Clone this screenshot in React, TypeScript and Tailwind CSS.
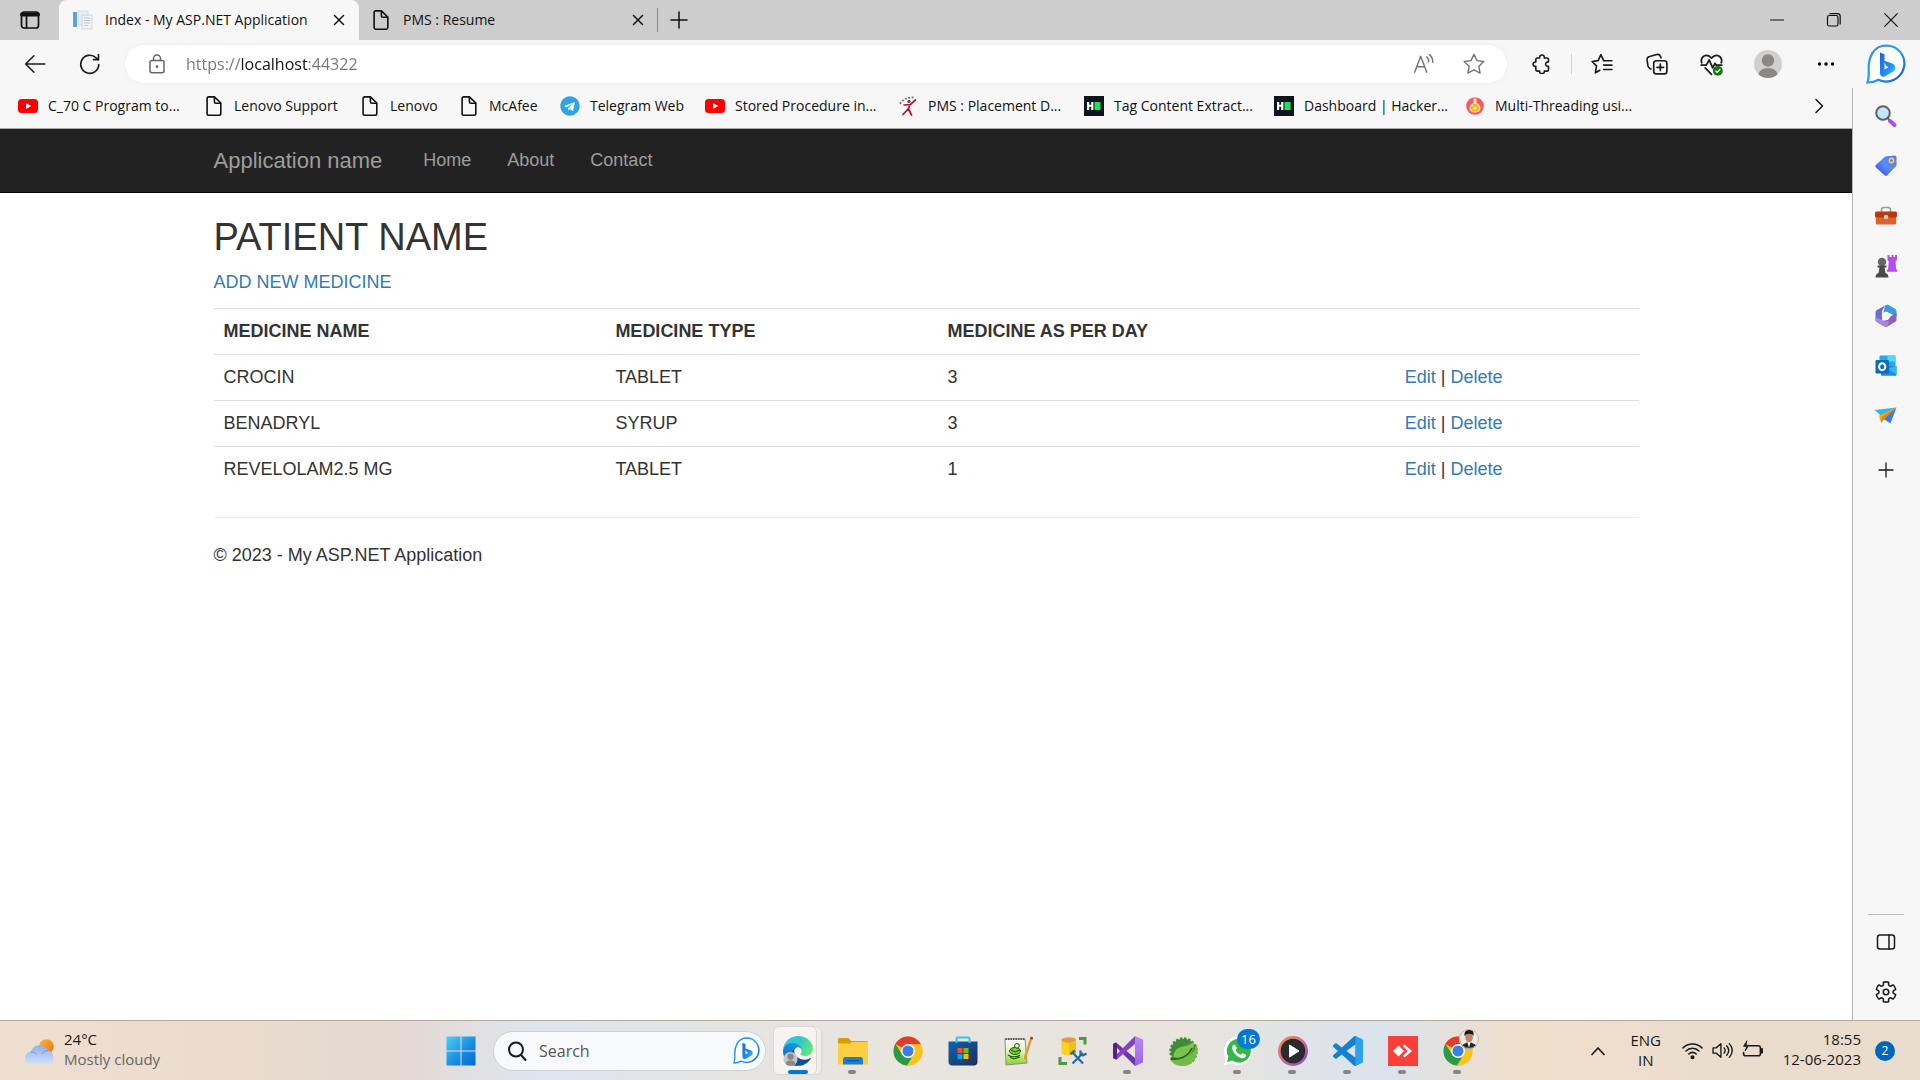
import React from "react";
import { FaTelegram } from "react-icons/fa";

type Kids = { children: React.ReactNode };

/* ---------- Icon helpers ---------- */

function Line({ size = 20, width = 1.5, className = "", children }: Kids & { size?: number; width?: number; className?: string }) {
  return (
    <svg
      width={size}
      height={size}
      viewBox="0 0 20 20"
      fill="none"
      stroke="currentColor"
      strokeWidth={width}
      strokeLinecap="round"
      strokeLinejoin="round"
      className={`shrink-0 ${className}`}
      aria-hidden="true"
    >
      {children}
    </svg>
  );
}

function Art({ size = 30, box = "0 0 30 30", children }: Kids & { size?: number; box?: string }) {
  return (
    <svg width={size} height={size} viewBox={box} className="shrink-0" aria-hidden="true">
      {children}
    </svg>
  );
}

const PageIcon = () => (
  <Line width={1.6}>
    <path d="M4.800 .9h5.600L16.800 7v10.500a1.700 1.700 0 0 1-1.700 1.700H4.800a1.700 1.700 0 0 1-1.700-1.700V2.600A1.700 1.700 0 0 1 4.800 .9z" />
    <path d="M10.400 1.200v4.600a1.500 1.500 0 0 0 1.500 1.500h4.600" />
  </Line>
);

const CloseIcon = () => (
  <Line size={20}>
    <path d="M5.500 5.500l9 9M14.500 5.500l-9 9" />
  </Line>
);

const YouTubeIcon = () => (
  <Art size={20} box="0 0 20 20">
    <rect x="0" y="3" width="20" height="14" rx="3.500" fill="#f00" />
    <path d="M8 7l5.200 3L8 13z" fill="#fff" />
  </Art>
);

const HackerIcon = () => (
  <Art size={20} box="0 0 20 20">
    <rect width="20" height="20" fill="#0e141e" />
    <path d="M3 6h2.200v2.800h2V6h2.200v8H7.200v-3.200h-2V14H3z" fill="#fff" />
    <rect x="10.500" y="6" width="6" height="8" fill="#1ee05f" />
  </Art>
);

const RunnerIcon = () => (
  <Art size={20} box="0 0 20 20">
    <path d="M2 8C5 3 10 1 17 1.500" stroke="#777" strokeWidth="1.800" strokeDasharray="2 1.500" fill="none" />
    <circle cx="11" cy="5.500" r="1.700" fill="#555" />
    <path d="M17.500 4L12.500 8.500l-6.500.5M12 8.500l-1.500 4.500 3 6M10.500 12.500l-5.500 6" stroke="#b5122f" strokeWidth="1.700" fill="none" strokeLinecap="round" />
  </Art>
);

const FlaskIcon = () => (
  <Art size={20} box="0 0 20 20">
    <circle cx="10" cy="10" r="8.800" fill="#f4595b" />
    <path d="M8.500 2.500h3v4.500c2.500 1 4 3 4 5.200 0 2.600-2.300 4.300-5.500 4.300s-5.500-1.700-5.500-4.300C4.500 10 6 8 8.500 7z" fill="#fbe3dc" />
    <path d="M8 8h4v1.500c1.500.5 2.300 1.500 2.300 3 0 1.900-1.800 3-4.300 3s-4.300-1.100-4.300-3c0-1.500.8-2.500 2.300-3z" fill="#f5b81c" />
    <path d="M8.500 11h3v2.500h-3z" fill="#fbe88c" />
  </Art>
);

const TelegramIcon = () => (
  <span className="flex size-5 shrink-0 items-center justify-center rounded-full bg-white">
    <FaTelegram className="size-5 text-[#2ca5e0]" />
  </span>
);

function BingIcon({ size, id }: { size: number; id: string }) {
  return (
    <Art size={size} box="0 0 40 40">
      <defs>
        <linearGradient id={`${id}r`} x1="0" y1="0" x2="1" y2="1">
          <stop offset="0" stopColor="#2390f0" />
          <stop offset=".5" stopColor="#2a9df4" />
          <stop offset="1" stopColor="#1452c8" />
        </linearGradient>
        <linearGradient id={`${id}b`} x1="0" y1="0" x2="1" y2="1">
          <stop offset="0" stopColor="#1b62e0" />
          <stop offset=".6" stopColor="#1f8df0" />
          <stop offset="1" stopColor="#35d6e8" />
        </linearGradient>
      </defs>
      <path d="M20.500 1.500a18 18 0 1 1-8 34.200c-3 1.700-6.500 2.700-11 2.800 1.400-4 1.400-7 1.200-11.500C2 14 7 1.500 20.500 1.500z" fill="#fff" stroke={`url(#${id}r)`} strokeWidth="2.200" />
      <path d="M14 8.500l4.500 1.700v15.300l4-2.200-2.500-1.500-2.200-5.300 9.500 3.400c3 1.500 2.400 6-.4 7.800l-8.200 4.800c-2.400 1-4.700-.8-4.700-3.200z" fill={`url(#${id}b)`} />
    </Art>
  );
}

function gearPath() {
  const pt = (r: number, deg: number) => {
    const a = (deg * Math.PI) / 180;
    return `${(10 + r * Math.cos(a)).toFixed(2)} ${(10 + r * Math.sin(a)).toFixed(2)}`;
  };
  let d = "";
  for (let k = 0; k < 6; k++) {
    const c = k * 60 - 90;
    d += `${k === 0 ? "M" : "L"}${pt(6.7, c - 21)}L${pt(9.1, c - 15)}Q${pt(9.6, c)} ${pt(9.1, c + 15)}L${pt(6.7, c + 21)}Q${pt(6.2, c + 30)} ${pt(6.7, c + 39)}`;
  }
  return d + "Z";
}

/* ---------- Browser chrome ---------- */

function IconButton({ label, className, children }: Kids & { label: string; className: string }) {
  return (
    <button type="button" aria-label={label} className={`flex shrink-0 items-center justify-center ${className}`}>
      {children}
    </button>
  );
}

function TabBar() {
  return (
    <div className="flex h-10 shrink-0 items-stretch bg-[#cdcdcd] pr-px text-[14px] text-[#111]">
      <IconButton label="Tab actions" className="w-[59px]">
        <Line width={1.700}>
          <rect x="1.500" y="2" width="17" height="16" rx="2.500" />
          <path d="M2 4.500h16" strokeWidth="4" />
          <path d="M6.500 6v12" />
        </Line>
      </IconButton>
      <div className="flex w-[300px] items-center rounded-t-lg bg-[#f7f7f7] pl-[14px] pr-[10px]">
        <Art size={20} box="0 0 20 20">
          <rect x="0" y="2" width="4" height="15" fill="#5ba3d9" />
          <rect x="5" y="1" width="10" height="14" fill="#e8edf2" stroke="#c3ccd6" strokeWidth=".6" />
          <rect x="9" y="5" width="10" height="14" fill="#f1f4f7" stroke="#b6c0cc" strokeWidth=".6" />
          <path d="M11 8h6M11 10.500h6M11 13h6M11 15.500h4" stroke="#b9c6d4" />
        </Art>
        <span className="ml-3 flex-1 whitespace-nowrap pb-0.5">Index - My ASP.NET Application</span>
        <IconButton label="Close tab" className="size-5"><CloseIcon /></IconButton>
      </div>
      <div className="flex w-[298px] items-center pl-[12px] pr-[9px]">
        <PageIcon />
        <span className="ml-3 flex-1 whitespace-nowrap pb-0.5">PMS : Resume</span>
        <IconButton label="Close tab" className="size-5"><CloseIcon /></IconButton>
      </div>
      <div className="my-2 w-px bg-[#888]" />
      <IconButton label="New tab" className="w-[42px]">
        <Line><path d="M10 2v16M2 10h16" /></Line>
      </IconButton>
      <div className="flex-1" />
      <IconButton label="Minimize" className="w-[57px]">
        <Line width={1.200}><path d="M3.500 10h13" /></Line>
      </IconButton>
      <IconButton label="Restore" className="w-[57px]">
        <Line width={1.200}>
          <rect x="3.500" y="5.500" width="10.500" height="10.500" rx="1.800" />
          <path d="M6 3.700h7.500a2.700 2.700 0 0 1 2.700 2.700V14" />
        </Line>
      </IconButton>
      <IconButton label="Close" className="w-[57px]">
        <Line width={1.200}><path d="M3.700 3.700l12.600 12.600M16.300 3.700L3.700 16.300" /></Line>
      </IconButton>
    </div>
  );
}

function Toolbar() {
  return (
    <div className="flex h-12 shrink-0 items-center bg-[#f7f7f7] pr-0.5 text-[#1a1a1a]">
      <IconButton label="Back" className="ml-[7px] h-10 w-14">
        <Line size={22} width={1.400}><path d="M19 10H1.500M9 2.500L1.500 10 9 17.500" /></Line>
      </IconButton>
      <IconButton label="Refresh" className="h-10 w-[54px]">
        <Line size={22} width={1.500}>
          <path d="M18 10.500A8.200 8.200 0 1 1 15.300 4.200L17.500 6" />
          <path d="M17.700 1.500V6h-4.500" />
        </Line>
      </IconButton>
      <div className="ml-2 flex h-[38px] flex-1 items-center rounded-full bg-white pl-[22px] pr-2 shadow-[0_0_4px_rgba(0,0,0,0.06)]">
        <Line className="text-[#666]">
          <rect x="3" y="6.500" width="14" height="12.300" rx="2" />
          <path d="M6.500 6.500V4.500a3.500 3.500 0 0 1 7 0v2" />
          <circle cx="10" cy="12.600" r=".7" fill="currentColor" />
        </Line>
        <input
          type="text"
          aria-label="Address"
          defaultValue="https://localhost:44322"
          className="ml-[19px] min-w-0 flex-1 bg-[linear-gradient(90deg,#767676_55px,#111_55px,#111_122px,#767676_122px)] bg-clip-text text-[16px] text-transparent outline-none"
        />
        <IconButton label="Read aloud" className="w-[50px] text-[#757575]">
          <Line size={22} width={1.300}>
            <path d="M1.500 17.500L7 3l5.500 14.500M3.500 12.500h7" />
            <path d="M12.500 3.500a6 6 0 0 1 1.800 4.500M15 1.500a9 9 0 0 1 3 7" />
          </Line>
        </IconButton>
        <IconButton label="Add to favorites" className="w-[50px] text-[#757575]">
          <Line size={22} width={1.300}>
            <path d="M10 1.200l2.700 5.700 6.200.8-4.500 4.300 1.100 6.300L10 15.300l-5.500 3 1.100-6.300L1.100 7.700l6.200-.8z" />
          </Line>
        </IconButton>
      </div>
      <IconButton label="Extensions" className="ml-[7px] w-[55px]">
        <Line width={1.600}>
          <path d="M5.500 4h2.200C7.300 1.800 8.500 1 10 1s2.700.8 2.300 3h2.500c1 0 1.700.7 1.700 1.700v2.200c-3.800-.3-3.800 4.800 0 4.500v3c0 1-.7 1.700-1.700 1.700h-2.500c.4 2-1 2.400-2.300 2.400s-2.700-.4-2.300-2.400H5.500c-1 0-1.700-.7-1.700-1.700v-3c-3.600.4-3.600-4.700 0-4.400V5.700C3.800 4.700 4.500 4 5.500 4z" />
        </Line>
      </IconButton>
      <div className="mx-[2px] h-5 w-px bg-[#cfcfcf]" />
      <IconButton label="Favorites" className="w-[55px]">
        <Line size={22} width={1.500}>
          <path d="M11.500 7L9 1.500 6.500 6.900 1 7.700l4 4-1 6.300 4-2.300" />
          <path d="M12 7h7M11.500 11h7.500M11.500 15h7.500" />
        </Line>
      </IconButton>
      <IconButton label="Collections" className="w-[55px]">
        <Line size={22} width={1.500}>
          <rect x="7" y="7" width="12" height="12" rx="2.500" />
          <path d="M13 10v6M10 13h6M4.500 14.500l-1-.5a3 3 0 0 1-1.700-2.200L1 6.500a3 3 0 0 1 2.300-3.300l6.500-1.800a3 3 0 0 1 3.500 2l.3 1" />
        </Line>
      </IconButton>
      <IconButton label="Browser essentials" className="w-[55px]">
        <Line size={23} width={1.500}>
          <path d="M1.500 8.500C0 4 4 1 7.500 2.500c1 .5 1.700 1.200 2.500 2 .8-.8 1.500-1.500 2.500-2C16 1 20 4 18.500 8.500" />
          <path d="M1 10.500h4.500L8 6l3 7 2-4 1 1.500h5M4.500 13L10 18.500" />
          <circle cx="15.500" cy="15.500" r="4.300" fill="#117a13" stroke="none" />
          <path d="M13.700 15.700l1.300 1.200 2.300-2.700" stroke="#fff" strokeWidth="1.100" />
        </Line>
      </IconButton>
      <IconButton label="Profile" className="w-[58px]">
        <Art size={28} box="0 0 28 28">
          <clipPath id="avatar"><circle cx="14" cy="14" r="14" /></clipPath>
          <g clipPath="url(#avatar)">
            <rect width="28" height="28" fill="#d2d0ce" />
            <circle cx="14" cy="10.500" r="6.200" fill="#8a8886" />
            <path d="M4 28c0-6 3-10 10-10s10 4 10 10z" fill="#8a8886" />
          </g>
        </Art>
      </IconButton>
      <IconButton label="Settings and more" className="w-[57px]">
        <Art size={20} box="0 0 20 20">
          <circle cx="3.500" cy="10" r="1.700" /><circle cx="10" cy="10" r="1.700" /><circle cx="16.500" cy="10" r="1.700" />
        </Art>
      </IconButton>
      <IconButton label="Bing" className="w-[64px]">
        <BingIcon size={40} id="bt" />
      </IconButton>
    </div>
  );
}

const bookmarks = [
  { label: "C_70 C Program to...", icon: <YouTubeIcon />, width: "w-[186px]" },
  { label: "Lenovo Support", icon: <PageIcon />, width: "w-[156px]" },
  { label: "Lenovo", icon: <PageIcon />, width: "w-[99px]" },
  { label: "McAfee", icon: <PageIcon />, width: "w-[101px]" },
  { label: "Telegram Web", icon: <TelegramIcon />, width: "w-[145px]" },
  { label: "Stored Procedure in...", icon: <YouTubeIcon />, width: "w-[193px]" },
  { label: "PMS : Placement D...", icon: <RunnerIcon />, width: "w-[186px]" },
  { label: "Tag Content Extract...", icon: <HackerIcon />, width: "w-[190px]" },
  { label: "Dashboard | Hacker...", icon: <HackerIcon />, width: "w-[191px]" },
  { label: "Multi-Threading usi...", icon: <FlaskIcon />, width: "w-[180px]" },
];

function BookmarksBar() {
  return (
    <nav aria-label="Bookmarks" className="flex h-[41px] shrink-0 items-center border-b border-[#a9a9a9] bg-[#f7f7f7] pb-1 pl-[18px] text-[14px] text-[#111]">
      {bookmarks.map((b) => (
        <a key={b.label} href="#" className={`flex shrink-0 items-center gap-[10px] whitespace-nowrap ${b.width}`}>
          {b.icon}
          <span className="pb-0.5">{b.label}</span>
        </a>
      ))}
      <div className="flex-1" />
      <IconButton label="More bookmarks" className="w-[66px]">
        <Line><path d="M7 3.500l6.500 6.500L7 16.500" /></Line>
      </IconButton>
    </nav>
  );
}

/* ---------- Web page ---------- */

const medicines = [
  { name: "CROCIN", type: "TABLET", perDay: "3" },
  { name: "BENADRYL", type: "SYRUP", perDay: "3" },
  { name: "REVELOLAM2.5 MG", type: "TABLET", perDay: "1" },
];

function WebPage() {
  return (
    <div className="min-h-0 flex-1 bg-white font-['Liberation_Sans',Arial,sans-serif] text-[18px] leading-[25px] text-[#333]">
      <header className="border-b border-[#080808] bg-[#222] text-[#9d9d9d]">
        <div className="mx-auto flex h-[63px] max-w-[1425px] items-center">
          <a href="#" className="mr-[23px] text-[22px]">Application name</a>
          <nav className="flex">
            <a href="#" className="px-[18px]">Home</a>
            <a href="#" className="px-[18px]">About</a>
            <a href="#" className="px-[18px]">Contact</a>
          </nav>
        </div>
      </header>
      <main className="mx-auto max-w-[1425px] pt-[23px]">
        <h2 className="text-[38px] leading-[42px]">PATIENT NAME</h2>
        <p className="mt-3"><a href="#" className="text-[#337ab7]">ADD NEW MEDICINE</a></p>
        <table className="mt-[13px] w-full table-fixed border-collapse text-left">
          <thead>
            <tr className="border-t border-[#ddd]">
              <th className="w-[27.5%] px-[10px] py-[10px]">MEDICINE NAME</th>
              <th className="w-[23.3%] px-[10px] py-[10px]">MEDICINE TYPE</th>
              <th className="w-[32.1%] px-[10px] py-[10px]">MEDICINE AS PER DAY</th>
              <th className="w-[17.1%] px-[10px] py-[10px]" aria-label="Actions" />
            </tr>
          </thead>
          <tbody>
            {medicines.map((m) => (
              <tr key={m.name} className="border-t border-[#ddd]">
                <td className="px-[10px] py-[10px]">{m.name}</td>
                <td className="px-[10px] py-[10px]">{m.type}</td>
                <td className="px-[10px] py-[10px]">{m.perDay}</td>
                <td className="px-[10px] py-[10px]">
                  <a href="#" className="text-[#337ab7]">Edit</a> | <a href="#" className="text-[#337ab7]">Delete</a>
                </td>
              </tr>
            ))}
          </tbody>
        </table>
        <footer className="mt-[25px] border-t border-[#eee] pt-[25px]">
          <p>© 2023 - My ASP.NET Application</p>
        </footer>
      </main>
    </div>
  );
}

/* ---------- Side bar ---------- */

const sideApps = [
  {
    label: "Search",
    icon: (
      <Art size={24} box="0 0 24 24">
        <path d="M16 17l4.500 4" stroke="#b14af0" strokeWidth="4" strokeLinecap="round" />
        <path d="M13 13.500l2.500 2.500" stroke="#6a6a6a" strokeWidth="2" />
        <circle cx="9" cy="9" r="6.800" fill="#bfe6fb" stroke="#626262" strokeWidth="2" />
      </Art>
    ),
  },
  {
    label: "Shopping",
    icon: (
      <Art size={24} box="0 0 24 24">
        <defs>
          <linearGradient id="tag" x1="1" y1="0" x2="0" y2="1"><stop offset="0" stopColor="#4f78ff" /><stop offset=".5" stopColor="#5a8cf5" /><stop offset="1" stopColor="#3d3df0" /></linearGradient>
        </defs>
        <path d="M12.500 2.200L20.500 1.500c1.300 0 2 .8 2 2v7.300c0 .7-.3 1.200-.7 1.700l-8.500 8.800c-.8.800-2 .8-2.800 0L2 13.500c-.8-.8-.8-2 0-2.800l9-8c.4-.3.900-.5 1.500-.5z" fill="url(#tag)" />
        <circle cx="17.500" cy="6.500" r="2.100" fill="#6b6be0" stroke="#ffd43a" strokeWidth="1.600" />
      </Art>
    ),
  },
  {
    label: "Tools",
    icon: (
      <Art size={24} box="0 0 24 24">
        <path d="M7.500 8V6c0-1.500 1-2.500 2.500-2.500h4c1.500 0 2.500 1 2.500 2.500v2" fill="none" stroke="#9b9b9b" strokeWidth="1.600" />
        <rect x="1.800" y="12" width="20.400" height="8.500" rx="1.500" fill="#e2602a" />
        <rect x="1" y="7.500" width="22" height="6" rx="1.500" fill="#b8390b" />
        <circle cx="12" cy="13" r="2.300" fill="#c9c9c9" />
      </Art>
    ),
  },
  {
    label: "Games",
    icon: (
      <Art size={24} box="0 0 24 24">
        <path d="M13.500 1h2v2h2V1h2v2h1.500V1h2v5l-1.500 1.500.7 8h1v2.300H13v-2.300h1l.8-8L13.500 6z" fill="#b44cf0" />
        <circle cx="8" cy="8" r="4.200" fill="#666" />
        <path d="M3.500 11.500h9v2h-2l1 5.500c1.800.4 2.700 1.700 3 4.500H1.500c.3-2.800 1.200-4.100 3-4.500l1-5.500h-2z" fill="#4a4a4a" />
      </Art>
    ),
  },
  {
    label: "Microsoft 365",
    icon: (
      <Art size={24} box="0 0 24 24">
        <path d="M11 1.500l1.500-.7c.8-.3 1.500-.2 2.200.2l6.300 3.700c1 .6 1.500 1.400 1.500 2.500v5.500L15.500 9 8 14.500z" fill="#3b9be0" />
        <path d="M11 1.500L3 6c-1 .6-1.500 1.400-1.500 2.500v7c0 1.100.5 1.900 1.500 2.500l5 2.500V7z" fill="#6f6bd6" />
        <path d="M22.500 9v6.500c0 1.100-.5 1.900-1.500 2.500l-7.500 4.500c-.9.500-2 .5-3 0L3.500 18.500l9-2.500 4.500-4z" fill="#8f5fc4" />
        <path d="M1.500 13v2.500c0 1.100.5 1.900 1.500 2.500l7.500 4.500c1 .5 2 .5 3 0l1.500-5.500-4 .5z" fill="#a887dd" />
        <circle cx="12" cy="12" r="4.200" fill="#f7f7f7" />
      </Art>
    ),
  },
  {
    label: "Outlook",
    icon: (
      <Art size={24} box="0 0 24 24">
        <rect x="5.500" y="1.500" width="16" height="13" rx="1" fill="#28a8ea" />
        <path d="M13.500 1.500h8v6h-8z" fill="#50d9ff" />
        <path d="M7 12h15.500v8.500c0 .8-.5 1.300-1.300 1.300H8c-.6 0-1-.4-1-1z" fill="#1490df" />
        <path d="M22.500 11.500v9L14 15z" fill="#35b8f1" />
        <rect x="1.500" y="6" width="13.500" height="13.500" rx="1.300" fill="#0f6cbd" />
        <ellipse cx="8.200" cy="12.700" rx="3.100" ry="3.500" fill="none" stroke="#fff" strokeWidth="2" />
      </Art>
    ),
  },
  {
    label: "Drop",
    icon: (
      <Art size={24} box="0 0 24 24">
        <path d="M0.500 6l22-2.500L7.500 12z" fill="#34b4f0" />
        <path d="M22.500 3.500l-6 16L8 14z" fill="#2f7ff0" />
        <path d="M22.500 3.500L5 11.500l2 7.500 3.500-4.500z" fill="#f5a81c" />
        <path d="M22.500 3.500L10.500 14.500 7 19l1-6z" fill="#d98707" />
      </Art>
    ),
  },
];

function SideBar() {
  return (
    <aside className="flex w-[68px] shrink-0 flex-col items-center border-l border-[#b5b5b5] bg-[#f7f7f7] pb-[3px] pr-px pt-[3px] text-[#1a1a1a]">
      {sideApps.map((a) => (
        <IconButton key={a.label} label={a.label} className="h-[50px] w-full">{a.icon}</IconButton>
      ))}
      <IconButton label="Customize" className="mt-1 h-[50px] w-full">
        <Line width={1.300}><path d="M10 3v14M3 10h14" /></Line>
      </IconButton>
      <div className="flex-1" />
      <div className="mb-[2px] h-px w-9 bg-[#bdbdbd]" />
      <IconButton label="Hide sidebar" className="h-[50px] w-full">
        <Line width={1.500}>
          <rect x="1.500" y="3" width="17" height="14" rx="2.500" />
          <path d="M13 3v14" />
        </Line>
      </IconButton>
      <IconButton label="Settings" className="h-[50px] w-full">
        <Line size={22} width={1.400}>
          <path d={gearPath()} />
          <circle cx="10" cy="10" r="2.500" />
        </Line>
      </IconButton>
    </aside>
  );
}

/* ---------- Task bar ---------- */

const Chrome = ({ id }: { id: string }) => (
  <Art>
    <clipPath id={id}><circle cx="15" cy="15" r="14.500" /></clipPath>
    <g clipPath={`url(#${id})`}>
      <rect width="30" height="30" fill="#fbc116" />
      <path d="M15 15L1.500 7.500-1 0h32v8.200H15z" fill="#e33b2e" />
      <path d="M2.200 7.500L9.100 18.500 15 21.800h6L13.800 31H-1V7z" fill="#2b9a48" />
      <path d="M21 18.500L13.500 30H30V8.200H15z" fill="#fcc31e" />
    </g>
    <circle cx="15" cy="15" r="6.900" fill="#fff" />
    <circle cx="15" cy="15" r="5.500" fill="#3b7ded" />
  </Art>
);

const EdgeIcon = () => (
  <Art size={30} box="0 0 256 256">
    <defs>
      <linearGradient id="e1" x1="0" y1="0" x2="1" y2="0"><stop offset="0" stopColor="#0c59a4" /><stop offset="1" stopColor="#114a8b" /></linearGradient>
      <linearGradient id="e2" x1=".8" y1="0" x2=".3" y2="1"><stop offset="0" stopColor="#1b9de2" /><stop offset=".5" stopColor="#1582d4" /><stop offset="1" stopColor="#0067c0" /></linearGradient>
      <linearGradient id="e3" x1="0" y1=".3" x2="1" y2=".6"><stop offset="0" stopColor="#35c1f1" /><stop offset=".5" stopColor="#2fc9c8" /><stop offset="1" stopColor="#66eb6e" /></linearGradient>
    </defs>
    <path fill="url(#e1)" d="M231 190.500c-3.400 1.800-6.900 3.400-10.500 4.700a101.700 101.700 0 0 1-35.900 6.400c-47.300 0-88.500-32.500-88.500-74.300 0-11.400 6.400-21.900 16.400-27.300C69.700 101.800 58.700 146.400 58.700 172.500c0 73.900 68 81.300 82.700 81.300 7.900 0 19.800-2.300 27-4.600l1.300-.4c28.300-9.800 52.300-28.800 68.300-54.100 1.200-1.900.6-4.300-1.200-5.500-1.700-1.100-3.900-1-5.800.3z" />
    <path fill="url(#e2)" d="M105.700 241.400c-8.900-5.500-16.600-12.800-22.700-21.300-26.300-36-18.400-86.500 17.600-112.800 3.800-2.700 7.700-5.200 11.900-7.200 3.100-1.500 8.400-4.100 15.500-4 10.100.1 19.600 4.900 25.700 13 4 5.400 6.300 11.900 6.400 18.700 0-.2 24.500-79.600-80-79.600-43.900 0-80 41.700-80 78.200-.2 19.300 4 38.500 12.100 56 27.600 58.800 94.800 87.600 156.400 67.100-21.100 6.600-44.100 3.700-62.900-8.100z" />
    <path fill="url(#e3)" d="M152.300 148.900c-.9 1-3.400 2.500-3.400 5.600 0 2.600 1.700 5.200 4.800 7.300 14.300 10 41.400 8.600 41.500 8.600 10.700 0 21.100-2.900 30.300-8.300 18.800-11 30.400-31.100 30.400-52.900.3-22.400-8-37.300-11.300-43.900C223.500 23.900 177.700 0 128 0 58 0 1 56.200 0 126.200c.5-36.500 36.800-66 80-66 3.500 0 23.500.3 42 10.100 16.300 8.600 24.900 18.900 30.800 29.200 6.200 10.700 7.300 24.100 7.300 29.500 0 5.300-2.700 13.300-7.800 19.900z" />
    <circle cx="64" cy="196" r="60" fill="#c8c6c4" />
    <circle cx="64" cy="176" r="27" fill="#8a8886" />
    <path d="M24 238c0-22 16-32 40-32s40 10 40 32c-20 22-60 22-80 0z" fill="#8a8886" />
  </Art>
);

const FolderIcon = () => (
  <Art>
    <path d="M0 3.500C0 2.500.8 2 1.500 2h9L13 5h15.500c.8 0 1.500.5 1.500 1.500V12H0z" fill="#dd9c06" />
    <path d="M0 7.500h12L14 6h16v22.500H0z" fill="#ffce42" />
    <path d="M5 28.500v-5c0-1.500 1-2.500 2.500-2.500h15c1.500 0 2.500 1 2.500 2.500v5z" fill="#1680d6" />
    <path d="M9 24.700h12" stroke="#0a56a0" strokeWidth="1.300" />
  </Art>
);

const StoreIcon = () => (
  <Art>
    <defs><linearGradient id="st" x1="0" y1="0" x2="1" y2="1"><stop offset="0" stopColor="#0f62b5" /><stop offset="1" stopColor="#1f2f57" /></linearGradient></defs>
    <path d="M.5 5.500h29v20.500c0 2-1.500 3.500-3.500 3.500H4C2 29.500.5 28 .5 26z" fill="url(#st)" />
    <path d="M8.500 7V3c0-1 .6-1.500 1.500-1.500h10c.9 0 1.500.5 1.500 1.500v4" fill="none" stroke="#2fc4f5" strokeWidth="2" />
    <path d="M9.500 12h5v5h-5z" fill="#f25022" /><path d="M15.500 12h5v5h-5z" fill="#7fba00" />
    <path d="M9.500 18h5v5h-5z" fill="#00a4ef" /><path d="M15.500 18h5v5h-5z" fill="#ffb900" />
  </Art>
);

const NotepadIcon = () => (
  <Art>
    <defs><linearGradient id="np" x1="0" y1="0" x2="0" y2="1"><stop offset="0" stopColor="#fafbf8" /><stop offset=".45" stopColor="#e6f3cf" /><stop offset="1" stopColor="#86d416" /></linearGradient></defs>
    <path d="M2 3h20l2 24-21 2z" fill="url(#np)" stroke="#8b8f88" />
    <path d="M2.500 3h20" stroke="#555" strokeWidth="2" strokeDasharray="1.500 1" />
    <ellipse cx="12" cy="15" rx="5.500" ry="3.500" fill="#7ed321" stroke="#1f5c12" />
    <circle cx="14" cy="9.800" r="2.300" fill="#eef6e2" stroke="#1f5c12" />
    <path d="M5 19c3 2.500 9 2.500 12 0M7 21.500l4 1.500 6-2M8 14l4 2 5-2" stroke="#1f5c12" strokeWidth="1.100" fill="none" />
    <path d="M28.500 1.500L22.500 20l-.5 3" stroke="#e39a2c" strokeWidth="2.400" fill="none" />
    <path d="M29 1l-.8 2.400" stroke="#b03a2c" strokeWidth="2.600" />
  </Art>
);

const DataIcon = () => (
  <Art>
    <path d="M21 2.500h6v6M9 27.500H2v-6.500" stroke="#4c9a46" strokeWidth="3" fill="none" />
    <path d="M3.500 4v13c0 3 14.500 3 14.500 0V4z" fill="#fbd223" />
    <path d="M11 7h7v10c0 1.500-3 2.200-7 2.300z" fill="#f5bf0c" />
    <ellipse cx="10.700" cy="4" rx="7.300" ry="2.700" fill="#e59a3c" />
    <path d="M15 17l10 10.500M25 17L14.500 27.500" stroke="#1f6cb4" strokeWidth="2.200" />
    <path d="M12.500 18l4.500-3.500M22.500 14.500v3.500l2.500 1.500 3.500-2" stroke="#1f6cb4" strokeWidth="2.300" fill="none" />
  </Art>
);

const VisualStudioIcon = () => (
  <Art>
    <defs><linearGradient id="vs" x1="0" y1="0" x2="0" y2="1"><stop offset="0" stopColor="#b98af5" /><stop offset="1" stopColor="#9a63ea" /></linearGradient></defs>
    <path d="M0 8l3-1.500L22 22v8L4 12v11.500L0 22z" fill="#6b37a8" />
    <path d="M22 0v8L3.500 23.500 0 22l1-1z" fill="#8644c4" />
    <path d="M0 8l3-1.500 1 1V23l-1 .5L0 22z" fill="#52218f" />
    <path d="M22 0l8 3.500v23L22 30z" fill="url(#vs)" />
  </Art>
);

const SpringIcon = () => (
  <Art>
    <circle cx="15.500" cy="15.500" r="12.700" fill="#3d8a3a" stroke="#3d8a3a" strokeWidth="3" strokeDasharray="2.400 1.600" />
    <path d="M29 8c2 11-3 22-14 22C8 30 3 26.500 1.500 22 12 24 26 21 29 8z" fill="#76bb45" />
    <path d="M26 5c.5 9-3 15-11 16.500-4 .7-8 .3-9.500-.5C6 11 14 11 19 9.500c3-1 5-2 7-4.500z" fill="#7ec24c" />
    <path d="M3 23c8 1 17-2 21-11" stroke="#21652c" strokeWidth="1.800" fill="none" />
  </Art>
);

const WhatsAppIcon = () => (
  <Art>
    <path d="M16 .5A14.200 14.200 0 1 1 8.800 27.300L.5 29.500l2.300-8A14.200 14.200 0 0 1 16 .5z" fill="#fff" />
    <path d="M16 3A11.800 11.800 0 1 1 9.300 24.500L4 26l1.500-5.200A11.800 11.800 0 0 1 16 3z" fill="#35b64a" />
    <path d="M11.500 8.500c-2 .7-2.800 2.700-2.200 4.500 1.300 4.500 5 8 9.700 9.200 2 .3 4-.9 4.200-3.200l-3.700-2-1.800 1.800c-2.700-1-4.200-2.600-5.200-5l1.500-1.800z" fill="#fff" />
  </Art>
);

const MediaIcon = () => (
  <Art>
    <defs><linearGradient id="mp" x1="0" y1="0" x2="1" y2="1"><stop offset="0" stopColor="#ff8a3c" /><stop offset=".5" stopColor="#c77098" /><stop offset="1" stopColor="#7b47c9" /></linearGradient></defs>
    <circle cx="15" cy="15" r="15" fill="url(#mp)" />
    <circle cx="15" cy="15" r="12.300" fill="#2b2b2b" />
    <path d="M11.500 9v12l9.500-6z" fill="#fff" stroke="#fff" strokeLinejoin="round" />
  </Art>
);

const VsCodeIcon = () => (
  <Art box="0 0 24 24">
    <path
      fill="#1481cc"
      d="M23.150 2.587L18.210.21a1.494 1.494 0 0 0-1.705.29l-9.460 8.630-4.120-3.128a.999.999 0 0 0-1.276.057L.327 7.261A1 1 0 0 0 .326 8.740L3.899 12 .326 15.260a1 1 0 0 0 .001 1.479L1.650 17.940a.999.999 0 0 0 1.276.057l4.120-3.128 9.460 8.630a1.492 1.492 0 0 0 1.704.290l4.942-2.377A1.500 1.500 0 0 0 24 20.060V3.939a1.500 1.500 0 0 0-.850-1.352zm-5.146 14.861L10.826 12l7.178-5.448v10.896z"
    />
    <path fill="#2aa2f0" d="M18 0l5.200 2.600c.5.300.8.800.8 1.300v16.200c0 .5-.3 1-.8 1.300L18 24z" />
  </Art>
);

const AnyDeskIcon = () => (
  <Art>
    <rect width="30" height="30" fill="#fa3e39" />
    <path d="M10.500 9.500l5.500 5.500-5.500 5.500L5 15z" fill="#fff" />
    <path d="M15 10l1.500-1.500L24 15l-7.500 6.500L15 20l4.500-5z" fill="#fff" />
  </Art>
);

const PortraitIcon = () => (
  <Art size={20} box="0 0 20 20">
    <clipPath id="por"><circle cx="10" cy="10" r="10" /></clipPath>
    <g clipPath="url(#por)">
      <rect width="20" height="20" fill="#eee9e5" />
      <path d="M2 20l1-4 5-2.500h4l5 2.500 1 4z" fill="#22262e" />
      <path d="M8.500 13h3l-1.500 6z" fill="#fff" />
      <ellipse cx="10" cy="8" rx="3.900" ry="5.200" fill="#b98767" />
      <path d="M5.500 7C5 2 8 .5 10.500.7 14 .8 15 3 14.500 7c-1-3-7-3-9 0z" fill="#1d1715" />
    </g>
    <circle cx="10" cy="10" r="9.500" fill="none" stroke="#b9b5b2" />
  </Art>
);

type AppEntry = { label: string; icon: React.ReactNode; running?: boolean; badge?: React.ReactNode };

const apps: AppEntry[] = [
  { label: "File Explorer", icon: <FolderIcon />, running: true },
  { label: "Google Chrome", icon: <Chrome id="c1" /> },
  { label: "Microsoft Store", icon: <StoreIcon /> },
  { label: "Notepad++", icon: <NotepadIcon /> },
  { label: "Database Studio", icon: <DataIcon /> },
  { label: "Visual Studio", icon: <VisualStudioIcon />, running: true },
  { label: "Spring Tools", icon: <SpringIcon /> },
  {
    label: "WhatsApp",
    icon: <WhatsAppIcon />,
    running: true,
    badge: <span className="absolute left-[27px] top-[8px] flex h-5 w-[23px] items-center justify-center rounded-full bg-[#0078d4] text-[13px] text-white">16</span>,
  },
  { label: "Media Player", icon: <MediaIcon />, running: true },
  { label: "Visual Studio Code", icon: <VsCodeIcon />, running: true },
  { label: "AnyDesk", icon: <AnyDeskIcon />, running: true },
  { label: "Google Chrome profile", icon: <Chrome id="c2" />, running: true, badge: <span className="absolute left-[29px] top-[8px]"><PortraitIcon /></span> },
];

function TaskBar() {
  return (
    <footer className="flex h-[60px] shrink-0 items-stretch border-t border-[#b3aaa2] bg-[linear-gradient(90deg,#eedfd0_0%,#ecdccd_10%,#e4d9d2_21%,#dfe4ec_27%,#dde5f0_29%,#e3e4e5_35%,#e9e5df_46%,#e8e4dd_62%,#dbe3ee_72%,#e6e0da_76%,#f0dfca_79%,#ebddce_88%,#eadccc_100%)] pr-0.5 text-[15px] leading-5 text-[#1a1a1a]">
      <div className="flex flex-1 items-center">
        <button type="button" className="ml-[25px] flex items-center gap-[9px] text-left">
          <Art>
            <defs>
              <linearGradient id="sun" x1="0" y1="0" x2="1" y2="1"><stop offset="0" stopColor="#f9b233" /><stop offset="1" stopColor="#ee7410" /></linearGradient>
              <linearGradient id="cl" x1="0" y1="0" x2="0" y2="1"><stop offset="0" stopColor="#8fb0ee" /><stop offset="1" stopColor="#cfe0fb" /></linearGradient>
            </defs>
            <circle cx="21.500" cy="10.500" r="7.300" fill="url(#sun)" />
            <path d="M6 28a6 6 0 0 1-.5-12 9.500 9.500 0 0 1 17.500-1.500A7 7 0 0 1 23.500 28z" fill="url(#cl)" />
            <path d="M5.500 16c2.500-.5 5 .5 6.500 2.500M17 18c1.500-2.500 3.500-3.300 6-3.500" fill="none" stroke="#6f95e0" />
          </Art>
          <span className="pb-1">
            <span className="block">24°C</span>
            <span className="block text-[#666]">Mostly cloudy</span>
          </span>
        </button>
      </div>
      <div className="flex items-stretch">
        <IconButton label="Start" className="w-[55px]">
          <Art>
            <defs><linearGradient id="win" x1="0" y1="0" x2="1" y2="1"><stop offset="0" stopColor="#4cd0fb" /><stop offset=".6" stopColor="#1689dc" /><stop offset="1" stopColor="#0569cc" /></linearGradient></defs>
            <path d="M.5 .5h14v14h-14zM15.500 .5h14v14h-14zM.5 15.500h14v14h-14zM15.500 15.500h14v14h-14z" fill="url(#win)" />
          </Art>
        </IconButton>
        <label className="ml-[5px] mr-1 flex h-10 w-[273px] items-center self-center rounded-full border border-[#cfcfd2] bg-[#f8f9fb] pl-[13px] pr-[5px]">
          <Line size={20} width={2}>
            <circle cx="9" cy="8.500" r="7" />
            <path d="M14 14l4.500 5" />
          </Line>
          <input type="text" aria-label="Search" placeholder="Search" className="ml-3 min-w-0 flex-1 bg-transparent text-[16px] outline-none placeholder:text-[#555]" />
          <BingIcon size={27} id="bs" />
        </label>
        <button type="button" aria-label="Microsoft Edge" className="relative flex w-[55px] items-center justify-center">
          <span className="absolute left-[10px] top-[5px] h-[49px] w-[42px] rounded-md border border-[#dcd8d4] bg-[#f0edea]" />
          <span className="absolute left-[3px] top-[5px] h-[49px] w-[44px] rounded-md border border-[#dcd8d4] bg-[#f6f3f1]" />
          <span className="relative"><EdgeIcon /></span>
          <span className="absolute bottom-[6px] left-[18px] h-1 w-5 rounded-full bg-[#0078d4]" />
        </button>
        {apps.map((a) => (
          <button key={a.label} type="button" aria-label={a.label} className="relative flex w-[55px] items-center justify-center">
            {a.icon}
            {a.badge}
            {a.running && <span className="absolute bottom-[6px] left-[23px] h-1 w-2 rounded-full bg-[#858585]" />}
          </button>
        ))}
      </div>
      <div className="flex flex-1 items-center justify-end">
        <IconButton label="Hidden icons" className="w-10">
          <Line width={1.700}><path d="M4 13.500L10 7l6 6.500" /></Line>
        </IconButton>
        <button type="button" className="w-14 pb-0.5 text-center">
          <span className="block">ENG</span>
          <span className="block">IN</span>
        </button>
        <button type="button" aria-label="Network, sound and battery" className="ml-2 flex items-center gap-[9px]">
          <Line size={21}>
            <path d="M1 7.500c5-5 13-5 18 0M3.800 10.500c3.500-3.500 8.900-3.500 12.400 0M6.500 13.300c2-2 5-2 7 0" />
            <circle cx="10" cy="16.500" r="1.200" fill="currentColor" />
          </Line>
          <Line size={21} width={1.300}>
            <path d="M1 7.500h3L8.500 3.500v13L4 12.500H1z" />
            <path d="M11.500 7.500c1.200 1.500 1.200 3.500 0 5M14 5.500c2.300 2.700 2.300 6.300 0 9M16.500 3.500c3.400 4 3.400 9 0 13" />
          </Line>
          <Line size={21}>
            <path d="M7 5.500h8.500a2 2 0 0 1 2 2v5.500a2 2 0 0 1-2 2H3.500a2 2 0 0 1-2-2v-1" />
            <path d="M19 8.500v3.500" strokeWidth="2" />
            <path d="M4.500 1L1.500 6h3L3 10.500 6.500 5H4z" fill="currentColor" strokeWidth=".8" />
          </Line>
        </button>
        <button type="button" className="ml-5 pb-1 text-right">
          <span className="block">18:55</span>
          <span className="block">12-06-2023</span>
        </button>
        <button type="button" aria-label="2 notifications" className="ml-[14px] mr-[23px] flex size-5 items-center justify-center rounded-full bg-[#0067c0] text-[12px] text-white">2</button>
      </div>
    </footer>
  );
}

export default function App() {
  return (
    <div className="flex h-screen flex-col overflow-hidden bg-white font-['Open_Sans','Noto_Sans',sans-serif]">
      <TabBar />
      <Toolbar />
      <div className="flex min-h-0 flex-1">
        <div className="flex min-w-0 flex-1 flex-col">
          <BookmarksBar />
          <WebPage />
        </div>
        <SideBar />
      </div>
      <TaskBar />
    </div>
  );
}
